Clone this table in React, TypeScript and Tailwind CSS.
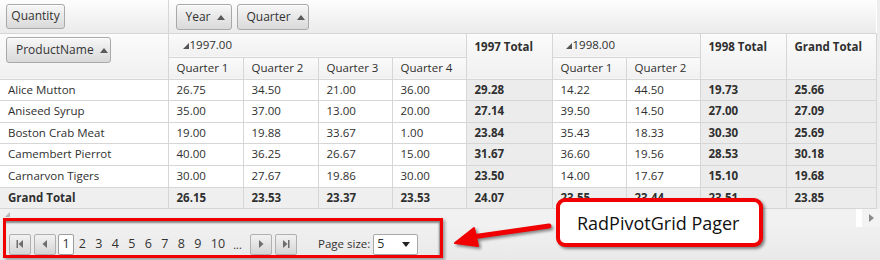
import React from 'react';

type Row = {
  name: string;
  y97: string[];
  t97: string;
  y98: string[];
  t98: string;
  grand: string;
};

const rows: Row[] = [
  { name: 'Alice Mutton', y97: ['26.75', '34.50', '21.00', '36.00'], t97: '29.28', y98: ['14.22', '44.50'], t98: '19.73', grand: '25.66' },
  { name: 'Aniseed Syrup', y97: ['35.00', '37.00', '13.00', '20.00'], t97: '27.14', y98: ['39.50', '14.50'], t98: '27.00', grand: '27.09' },
  { name: 'Boston Crab Meat', y97: ['19.00', '19.88', '33.67', '1.00'], t97: '23.84', y98: ['35.43', '18.33'], t98: '30.30', grand: '25.69' },
  { name: 'Camembert Pierrot', y97: ['40.00', '36.25', '26.67', '15.00'], t97: '31.67', y98: ['36.60', '19.56'], t98: '28.53', grand: '30.18' },
  { name: 'Carnarvon Tigers', y97: ['30.00', '27.67', '19.86', '30.00'], t97: '23.50', y98: ['14.00', '17.67'], t98: '15.10', grand: '19.68' },
];

const totals = {
  y97: ['26.15', '23.53', '23.37', '23.53'],
  t97: '24.07',
  y98: ['23.55', '23.44'],
  t98: '23.51',
  grand: '23.85',
};

const rowHeights = ['h-[21px]', 'h-[22px]', 'h-[21px]', 'h-[22px]', 'h-[22px]'];

const SortUp = () => (
  <svg width="8" height="5" viewBox="0 0 8 5" className="ml-[6px] mt-[1px]">
    <path d="M0 5 L4 0 L8 5 Z" fill="#5a5a5a" />
  </svg>
);

const Expander = () => (
  <svg width="6" height="6" viewBox="0 0 6 6" className="mr-[1px] mt-[2px]">
    <path d="M6 0 L6 6 L0 6 Z" fill="#555" />
  </svg>
);

const FieldButton = ({ label, sort, className = '' }: { label: string; sort?: boolean; className?: string }) => (
  <div
    className={`flex items-center border border-[#a9a9a9] rounded-[3px] bg-gradient-to-b from-[#f7f7f7] to-[#d9d9d9] text-[12px] text-[#333] shadow-[0_1px_0_rgba(255,255,255,0.8)_inset] ${className}`}
  >
    {label}
    {sort && <SortUp />}
  </div>
);

const PagerButton = ({ kind }: { kind: 'first' | 'prev' | 'next' | 'last' }) => (
  <div className="w-[22px] h-[21px] flex items-center justify-center border border-[#b0b0b0] rounded-[2px] bg-gradient-to-b from-[#f2f2f2] to-[#d5d5d5]">
    <svg width="10" height="10" viewBox="0 0 10 10">
      {kind === 'first' && (
        <>
          <rect x="1.5" y="1" width="1.5" height="8" fill="#6e6e6e" />
          <path d="M8 1 L8 9 L3.5 5 Z" fill="#6e6e6e" />
        </>
      )}
      {kind === 'prev' && <path d="M7 1 L7 9 L2.5 5 Z" fill="#6e6e6e" />}
      {kind === 'next' && <path d="M3 1 L3 9 L7.5 5 Z" fill="#6e6e6e" />}
      {kind === 'last' && (
        <>
          <path d="M2 1 L2 9 L6.5 5 Z" fill="#6e6e6e" />
          <rect x="7" y="1" width="1.5" height="8" fill="#6e6e6e" />
        </>
      )}
    </svg>
  </div>
);

const cell = 'border border-[#d6d6d6] pl-[8px] align-middle whitespace-nowrap';
const totalCell = `${cell} bg-[#ececec] font-bold`;
const headCell = 'border border-[#d6d6d6] pl-[8px] whitespace-nowrap bg-gradient-to-b from-[#fbfbfb] to-[#f0f0f0]';

export default function App() {
  return (
    <div className="relative w-[880px] h-[260px] overflow-hidden bg-[#ededed] font-['Open_Sans',sans-serif] text-[11.5px] text-[#2f2f2f] leading-none">
      <table className="table-fixed border-collapse w-[876px] bg-white">
        <colgroup>
          <col className="w-[168px]" />
          <col className="w-[75px]" />
          <col className="w-[75px]" />
          <col className="w-[74px]" />
          <col className="w-[74px]" />
          <col className="w-[86px]" />
          <col className="w-[74px]" />
          <col className="w-[74px]" />
          <col className="w-[86px]" />
          <col className="w-[90px]" />
        </colgroup>
        <tbody>
          {/* field lists: data field and column fields */}
          <tr className="h-[33px] bg-gradient-to-b from-[#fdfdfd] to-[#ebebeb]">
            <td className="border-r border-b border-[#d6d6d6] pl-[6px] align-middle">
              <FieldButton label="Quantity" className="w-[59px] h-[25px] justify-center" />
            </td>
            <td colSpan={9} className="border-b border-[#d6d6d6] pl-[7px] align-middle">
              <div className="flex gap-[5px] mt-[1px]">
                <FieldButton label="Year" sort className="w-[56px] h-[26px] pl-[9px]" />
                <FieldButton label="Quarter" sort className="w-[72px] h-[26px] pl-[9px]" />
              </div>
            </td>
          </tr>

          {/* column headers */}
          <tr className="h-[24px]">
            <td rowSpan={2} className="border border-[#d6d6d6] border-l-0 pl-[6px] align-top pt-[3px] bg-gradient-to-b from-[#fbfbfb] to-[#f0f0f0]">
              <FieldButton label="ProductName" sort className="w-[105px] h-[26px] pl-[9px]" />
            </td>
            <td colSpan={4} className={`${headCell} pl-[14px]`}>
              <div className="flex items-center">
                <Expander />
                1997.00
              </div>
            </td>
            <td rowSpan={2} className={`${headCell} align-top pt-[7px] font-bold`}>1997 Total</td>
            <td colSpan={2} className={`${headCell} pl-[13px]`}>
              <div className="flex items-center">
                <Expander />
                1998.00
              </div>
            </td>
            <td rowSpan={2} className={`${headCell} align-top pt-[7px] font-bold`}>1998 Total</td>
            <td rowSpan={2} className={`${headCell} align-top pt-[7px] font-bold`}>Grand Total</td>
          </tr>
          <tr className="h-[22px]">
            {['Quarter 1', 'Quarter 2', 'Quarter 3', 'Quarter 4'].map((q) => (
              <td key={`a${q}`} className={headCell}>{q}</td>
            ))}
            {['Quarter 1', 'Quarter 2'].map((q) => (
              <td key={`b${q}`} className={headCell}>{q}</td>
            ))}
          </tr>

          {/* values */}
          {rows.map((r, i) => (
            <tr key={r.name} className={rowHeights[i]}>
              <td className={`${cell} pl-[7px] border-l-0`}>{r.name}</td>
              {r.y97.map((v, j) => (
                <td key={j} className={cell}>{v}</td>
              ))}
              <td className={totalCell}>{r.t97}</td>
              {r.y98.map((v, j) => (
                <td key={j} className={cell}>{v}</td>
              ))}
              <td className={totalCell}>{r.t98}</td>
              <td className={totalCell}>{r.grand}</td>
            </tr>
          ))}
          <tr className="h-[21px] bg-[#efefef] font-bold">
            <td className={`${cell} pl-[7px] border-l-0`}>Grand Total</td>
            {totals.y97.map((v, j) => (
              <td key={j} className={cell}>{v}</td>
            ))}
            <td className={`${cell} bg-[#ececec]`}>{totals.t97}</td>
            {totals.y98.map((v, j) => (
              <td key={j} className={cell}>{v}</td>
            ))}
            <td className={`${cell} bg-[#ececec]`}>{totals.t98}</td>
            <td className={`${cell} bg-[#ececec]`}>{totals.grand}</td>
          </tr>
        </tbody>
      </table>

      {/* horizontal scrollbar */}
      <div className="flex h-[18px] bg-white">
        <div className="relative w-[856px] bg-[#f1f1f1]">
          <svg width="5" height="5" viewBox="0 0 5 5" className="absolute left-[5px] top-[3px]">
            <path d="M5 0 L5 5 L0 5 Z" fill="#b5b5b5" />
          </svg>
        </div>
        <div className="w-[6px]" />
        <div className="flex-1 flex items-center justify-center bg-[#f3f3f3]">
          <svg width="5" height="8" viewBox="0 0 5 8">
            <path d="M0 0 L5 4 L0 8 Z" fill="#8a8a8a" />
          </svg>
        </div>
      </div>

      {/* pager */}
      <div className="flex items-center h-[34px] pl-[9px] pt-[1px] bg-gradient-to-b from-[#f0f0f0] to-[#e9e9e9]">
        <div className="flex items-center gap-[3px]">
          <PagerButton kind="first" />
          <PagerButton kind="prev" />
        </div>
        <div className="flex items-center ml-[2px] text-[12.5px] text-[#333]">
          <div className="w-[16px] h-[21px] flex items-center justify-center bg-white border border-[#9e9e9e] rounded-[2px]">1</div>
          {['2', '3', '4', '5', '6', '7', '8', '9'].map((n) => (
            <span key={n} className="w-[16.5px] text-center">{n}</span>
          ))}
          <span className="w-[24px] text-center">10</span>
          <span className="w-[15px] text-center text-[11px]">...</span>
        </div>
        <div className="flex items-center gap-[3px] ml-[5px]">
          <PagerButton kind="next" />
          <PagerButton kind="last" />
        </div>
        <span className="ml-[21px] text-[11.5px] text-[#333]">Page size:</span>
        <div className="ml-[3px] w-[45px] h-[21px] flex items-center justify-between pl-[3px] pr-[7px] bg-white border border-[#a8a8a8] rounded-[2px] text-[12.5px]">
          5
          <svg width="8" height="5" viewBox="0 0 8 5">
            <path d="M0 0 L8 0 L4 5 Z" fill="#222" />
          </svg>
        </div>
      </div>

      {/* annotation: frame around the pager */}
      <div className="absolute left-[3px] top-[218px] w-[440px] h-[40px] border-[3px] border-[#f00000] shadow-[2px_2px_3px_rgba(0,0,0,0.35),inset_-1px_2px_2px_rgba(0,0,0,0.45)]" />

      {/* annotation: arrow */}
      <svg width="110" height="40" viewBox="0 0 110 40" className="absolute left-[450px] top-[214px] drop-shadow-[2px_2px_1.5px_rgba(0,0,0,0.45)]">
        <path d="M99 12 L22 23" stroke="#f00000" strokeWidth="5" strokeLinecap="round" />
        <path d="M5 29 L24 14 L28 32 Z" fill="#f00000" stroke="#f00000" strokeWidth="2" strokeLinejoin="round" />
      </svg>

      {/* annotation: callout */}
      <div className="absolute left-[556px] top-[198px] w-[207px] h-[49px] flex items-center pl-[17px] bg-white border-[4px] border-[#f00000] rounded-[9px] shadow-[2px_2px_3px_rgba(0,0,0,0.45)] text-[18px] text-[#111] font-['Open_Sans',sans-serif]">
        RadPivotGrid Pager
      </div>
    </div>
  );
}
